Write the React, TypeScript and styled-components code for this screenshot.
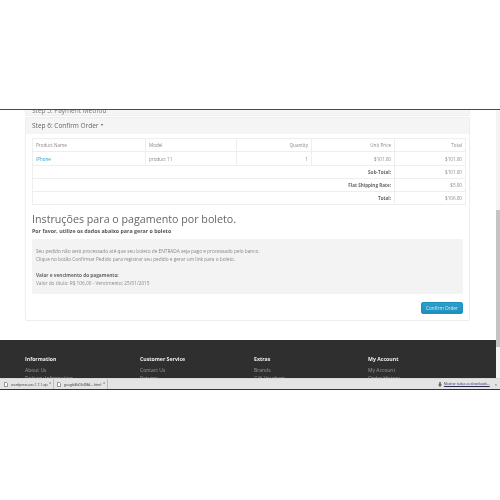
import React from "react";
import styled, { createGlobalStyle } from "styled-components";

const Global = createGlobalStyle`
  html, body { margin: 0; padding: 0; background: #fff; width: 500px; height: 500px; overflow: hidden; }
  * { box-sizing: border-box; }
  body { font-family: "Open Sans", "Liberation Sans", sans-serif; color: #666; }
`;

const Shot = styled.div`
  margin-top: 109px;
  height: 281px;
  position: relative;
  overflow: hidden;
  border-top: 1px solid #4a4a4a;
  border-bottom: 1px solid #333;
  background: #fff;
  filter: blur(0.3px);
`;
const Content = styled.div`
  padding: 0 30px 0 25px;
  display: flex;
  flex-direction: column;
`;
const PrevPanel = styled.div`
  height: 6px;
  background: #f5f5f5;
  border: 1px solid #eee;
  border-top: 0;
  border-radius: 0 0 2px 2px;
  font-size: 6.5px;
  line-height: 1px;
  padding-left: 6px;
  color: #777;
  overflow: hidden;
`;
const Panel = styled.section`
  margin-top: 1px;
  height: 204px;
  border: 1px solid #eee;
  border-radius: 2px;
  box-shadow: 0 0 1px rgba(0,0,0,.05);
`;
const PanelHead = styled.div`
  height: 16px;
  background: #f5f5f5;
  font-size: 6.5px;
  line-height: 13px;
  padding: 0 0 2px 6px;
  color: #666;
  display: flex;
  align-items: center;
  gap: 2px;
`;
const Caret = styled.span`
  width: 0;
  height: 0;
  border-left: 1.7px solid transparent;
  border-right: 1.7px solid transparent;
  border-top: 2px solid #555;
`;
const PanelBody = styled.div`
  padding: 4px 6px 0;
`;
const Table = styled.table`
  width: 433px;
  table-layout: fixed;
  border-collapse: collapse;
  font-size: 4.6px;
  color: #777;
`;
const HeadRow = styled.tr`
  height: 13px;
  border-bottom: 1px solid #e6e6e6;
`;
const Row = styled.tr<{ $h?: number }>`
  height: ${p => p.$h ?? 13}px;
`;
const Cell = styled.td<{ $right?: boolean; $bold?: boolean }>`
  border: 1px solid #eee;
  padding: 0 3px;
  line-height: 6px;
  text-align: ${p => (p.$right ? "right" : "left")};
  font-weight: ${p => (p.$bold ? 700 : 400)};
  color: ${p => (p.$bold ? "#666" : "#888")};
  white-space: nowrap;
`;
const ProductLink = styled.a`
  color: #23a1d1;
`;
const Title = styled.h1`
  margin: 7px 0 0;
  font-size: 10.7px;
  line-height: 15px;
  font-weight: 400;
  color: #666;
`;
const Lead = styled.p`
  margin: 1px 0 0;
  font-size: 5.3px;
  line-height: 7px;
  font-weight: 700;
  color: #555;
`;
const Well = styled.div`
  margin-top: 4px;
  height: 55px;
  background: #f3f3f3;
  border-radius: 2px;
  padding: 8px 4px 0;
  font-size: 4.75px;
  line-height: 8px;
  color: #888;
`;
const WellGap = styled.div`
  height: 7.5px;
`;
const WellStrong = styled.strong`
  display: block;
  font-weight: 700;
  color: #666;
`;
const Actions = styled.div`
  display: flex;
  justify-content: flex-end;
  margin-top: 8px;
`;
const Button = styled.button`
  width: 42px;
  height: 12px;
  padding: 0;
  border: 1px solid #1f90bb;
  border-radius: 2px;
  background: linear-gradient(#2a9fca, #1f8fc0);
  color: #d5eef8;
  font-family: inherit;
  font-size: 4.7px;
`;
const Footer = styled.footer`
  margin: 19px -30px 0 -25px;
  height: 60px;
  background: #2f2f2f;
  padding: 15px 0 0 25px;
  display: grid;
  grid-template-columns: 115px 114px 114px 1fr;
`;
const FootCol = styled.div`
  display: flex;
  flex-direction: column;
`;
const FootTitle = styled.div`
  font-size: 5.2px;
  line-height: 8px;
  font-weight: 700;
  color: #eee;
  margin-bottom: 2.5px;
`;
const FootLink = styled.div`
  font-size: 5px;
  line-height: 8px;
  color: #999;
`;
const DownloadBar = styled.div`
  position: absolute;
  left: 0;
  right: 0;
  bottom: 0;
  height: 11px;
  background: #e4e4e4;
  border-top: 1px solid #d8d8d8;
  display: flex;
  align-items: center;
  padding: 0 3px 0 1px;
`;
const DownloadItem = styled.div<{ $w: number }>`
  width: ${p => p.$w}px;
  height: 10px;
  border-right: 1px solid #bbb;
  display: flex;
  align-items: center;
  gap: 3px;
  padding-left: 3px;
  font-size: 3.4px;
  color: #333;
  position: relative;
`;
const FileIcon = styled.svg`
  width: 4px;
  height: 5px;
  flex: none;
`;
const Chevron = styled.span`
  position: absolute;
  right: 2px;
  top: 2px;
  font-size: 3px;
  color: #333;
`;
const DownArrow = styled.svg`
  margin-left: auto;
  width: 4px;
  height: 5px;
  flex: none;
`;
const ShowAllText = styled.a`
  margin-left: 2px;
  font-size: 3.25px;
  color: #2a2a55;
  text-decoration: underline;
`;
const Close = styled.span`
  margin-left: 5px;
  font-size: 4px;
  color: #444;
`;
const Scrollbar = styled.div`
  position: absolute;
  right: 0;
  top: 0;
  bottom: 11px;
  width: 4px;
  background: #f4f4f4;
`;
const Thumb = styled.div`
  margin-top: 100px;
  height: 137px;
  background: #c4c4c4;
`;

const footer = [
  ["Information", "About Us", "Delivery Information"],
  ["Customer Service", "Contact Us", "Returns"],
  ["Extras", "Brands", "Gift Vouchers"],
  ["My Account", "My Account", "Order History"],
];

const File = () => (
  <FileIcon viewBox="0 0 4 5">
    <path d="M.5.5h2l1 1v3h-3z" fill="#fff" stroke="#555" strokeWidth=".6" />
  </FileIcon>
);

export default function App() {
  return (
    <>
      <Global />
      <Shot>
        <Content>
          <PrevPanel>Step 5: Payment Method</PrevPanel>
          <Panel>
            <PanelHead>Step 6: Confirm Order <Caret /></PanelHead>
            <PanelBody>
              <Table>
                <colgroup>
                  <col style={{ width: 113 }} />
                  <col style={{ width: 91 }} />
                  <col style={{ width: 75 }} />
                  <col style={{ width: 83 }} />
                  <col style={{ width: 71 }} />
                </colgroup>
                <tbody>
                  <HeadRow>
                    <Cell>Product Name</Cell>
                    <Cell>Model</Cell>
                    <Cell $right>Quantity</Cell>
                    <Cell $right>Unit Price</Cell>
                    <Cell $right>Total</Cell>
                  </HeadRow>
                  <Row $h={14}>
                    <Cell><ProductLink>iPhone</ProductLink></Cell>
                    <Cell>product 11</Cell>
                    <Cell $right>1</Cell>
                    <Cell $right>$101.00</Cell>
                    <Cell $right>$101.00</Cell>
                  </Row>
                  <Row>
                    <Cell colSpan={4} $right $bold>Sub-Total:</Cell>
                    <Cell $right>$101.00</Cell>
                  </Row>
                  <Row>
                    <Cell colSpan={4} $right $bold>Flat Shipping Rate:</Cell>
                    <Cell $right>$5.00</Cell>
                  </Row>
                  <Row>
                    <Cell colSpan={4} $right $bold>Total:</Cell>
                    <Cell $right>$106.00</Cell>
                  </Row>
                </tbody>
              </Table>
              <Title>Instruções para o pagamento por boleto.</Title>
              <Lead>Por favor, utilize os dados abaixo para gerar o boleto</Lead>
              <Well>
                Seu pedido não será processado até que seu boleto de ENTRADA seja pago e processado pelo banco.
                <br />
                Clique no botão Confirmar Pedido para registrar seu pedido e gerar um link para o boleto.
                <WellGap />
                <WellStrong>Valor e vencimento do pagamento:</WellStrong>
                Valor do título: R$ 106,00 - Vencimento: 25/01/2015
              </Well>
              <Actions><Button>Confirm Order</Button></Actions>
            </PanelBody>
          </Panel>
          <Footer>
            {footer.map(([t, a, b]) => (
              <FootCol key={t}>
                <FootTitle>{t}</FootTitle>
                <FootLink>{a}</FootLink>
                <FootLink>{b}</FootLink>
              </FootCol>
            ))}
          </Footer>
        </Content>
        <Scrollbar><Thumb /></Scrollbar>
        <DownloadBar>
          <DownloadItem $w={53}><File />wordpress.sec.1.7.1.zip<Chevron>˄</Chevron></DownloadItem>
          <DownloadItem $w={54}><File />google8b03d98d....html<Chevron>˄</Chevron></DownloadItem>
          <DownArrow viewBox="0 0 4 5"><path d="M1.3 0h1.4v2.4H4L2 5 0 2.4h1.3z" fill="#555" /></DownArrow>
          <ShowAllText>Mostrar todos os downloads...</ShowAllText>
          <Close>×</Close>
        </DownloadBar>
      </Shot>
    </>
  );
}
